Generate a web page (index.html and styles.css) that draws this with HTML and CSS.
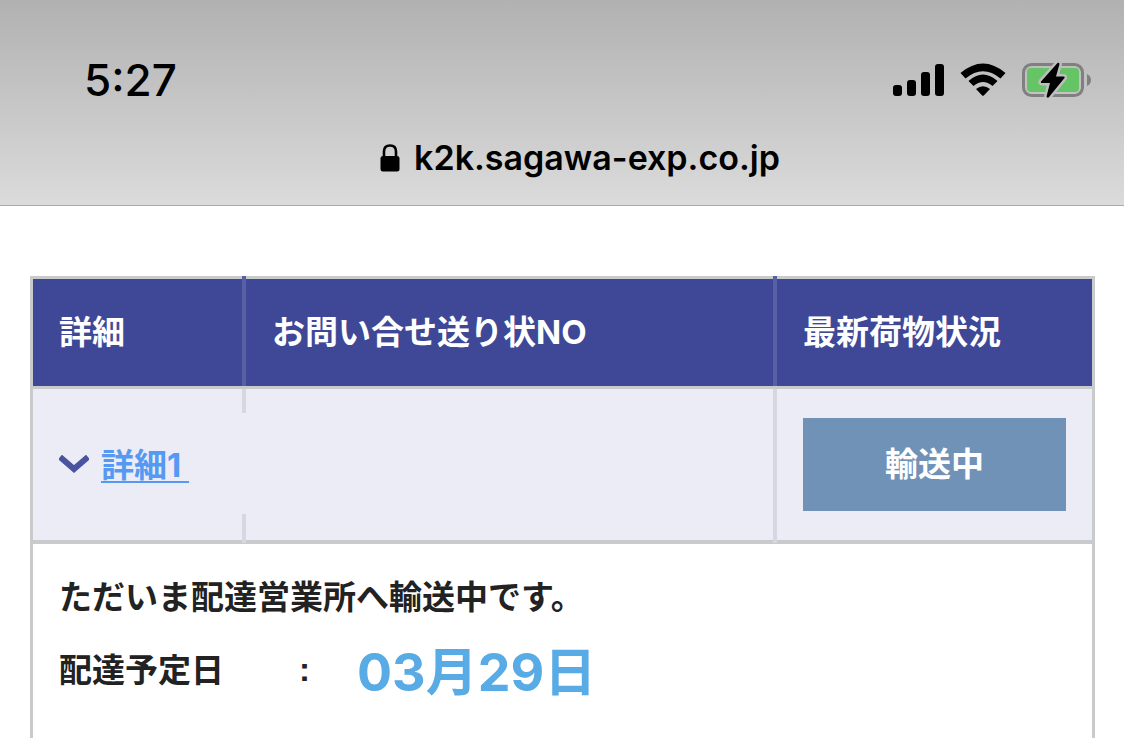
FILE: index.html
```html
<!DOCTYPE html>
<html lang="ja">
<head>
    <meta charset="UTF-8">
    <meta name="viewport" content="width=device-width, initial-scale=1.0">
    <title>お荷物問い合わせ</title>
    <link rel="stylesheet" href="styles.css">
</head>
<body>
    <header class="browser-bar">
        <div class="status">
            <time class="clock">5:27</time>
            <div class="status-icons">
                <svg class="signal" width="51" height="34" viewBox="0 0 51 34">
                    <rect x="0" y="22" width="9" height="11" rx="3"/>
                    <rect x="14" y="17" width="9" height="16" rx="3"/>
                    <rect x="28" y="9" width="9" height="24" rx="3"/>
                    <rect x="42" y="1" width="9" height="32" rx="3"/>
                </svg>
                <svg class="wifi" width="46" height="34" viewBox="0 0 46 34">
                    <path d="M0.5 10 Q23 -9 45.500 10 L40.500 15.500 Q23 1 5.500 15.500 Z"/>
                    <path d="M8.500 18 Q23 5 37.500 18 L32.500 23 Q23 15 13.500 23 Z"/>
                    <path d="M16 26 Q23 20.500 30 26 L23.800 32.500 Q23 33.200 22.200 32.500 Z"/>
                </svg>
                <svg class="battery" width="70" height="36" viewBox="0 0 70 36">
                    <rect x="1.500" y="2.500" width="59" height="31" rx="8" fill="none" stroke="#808080" stroke-width="3"/>
                    <rect x="5" y="6" width="52" height="24" rx="4" fill="#65c466"/>
                    <path d="M65 12 Q69 14 69 18 Q69 22 65 24 Z" fill="#808080"/>
                    <path d="M35.500 1 L19 19.500 Q18.500 21 20 21 L28 21 L24.500 34.500 Q25.500 36.500 27 35 L42.500 16 Q43 14.500 41.500 14.500 L34 14.500 L37.500 2 Q37 0 35.500 1 Z" fill="#000" stroke="#bebebe" stroke-width="5" paint-order="stroke"/>
                </svg>
            </div>
        </div>
        <div class="address">
            <svg class="lock" width="20" height="28" viewBox="0 0 20 28">
                <path d="M4 13 V7.500 Q4 1.500 10 1.500 Q16 1.500 16 7.500 V13" fill="none" stroke="#000" stroke-width="2.600"/>
                <rect x="0.500" y="12" width="19" height="15.500" rx="2.500"/>
            </svg>
            <span>k2k.sagawa-exp.co.jp</span>
        </div>
    </header>

    <main class="content">
        <table class="tracking">
            <colgroup>
                <col class="col-detail">
                <col class="col-number">
                <col class="col-state">
            </colgroup>
            <thead>
                <tr>
                    <th>詳細</th>
                    <th>お問い合せ送り状NO</th>
                    <th>最新荷物状況</th>
                </tr>
            </thead>
            <tbody>
                <tr class="summary">
                    <td class="masked">
                        <div class="toggle">
                            <svg width="30" height="20" viewBox="0 0 30 20">
                                <path d="M1 2 L15 14 L29 2" fill="none" stroke="#4a53a0" stroke-width="6"/>
                            </svg>
                            <a href="#detail1">詳細1&nbsp;</a>
                        </div>
                    </td>
                    <td></td>
                    <td><div class="state">輸送中</div></td>
                </tr>
                <tr class="detail" id="detail1">
                    <td colspan="3">
                        <p class="message">ただいま配達営業所へ輸送中です。</p>
                        <dl class="schedule">
                            <dt>配達予定日</dt>
                            <dd class="colon">:</dd>
                            <dd class="date">03月29日</dd>
                        </dl>
                    </td>
                </tr>
            </tbody>
        </table>
    </main>
</body>
</html>
```

FILE: styles.css
```css
body {
    margin: 0;
    background-color: #fff;
    color: #222;
    font-family: Inter, "Noto Sans CJK JP", sans-serif;
    font-size: 33px;
    font-weight: bold;
    line-height: 48px;
}
svg {
    display: block;
    flex: none;
}
.browser-bar {
    padding: 56px 32px 23px 84px;
    border-bottom: 1px solid #a9a9a9;
    background: linear-gradient(#b1b1b1, #dbdbdb);
    color: #000;
}
.status {
    display: flex;
    justify-content: space-between;
    align-items: center;
}
.clock {
    font-size: 44px;
    font-weight: 500;
}
.status-icons {
    display: flex;
    align-items: center;
    gap: 16px;
}
.address {
    display: flex;
    justify-content: center;
    align-items: center;
    gap: 14px;
    margin-top: 30px;
    padding-right: 16px;
    font-size: 34px;
    font-weight: 600;
}
.content {
    padding: 70px 29px 0 30px;
}
.tracking {
    width: 100%;
    table-layout: fixed;
    border: 3px solid #c9cacc;
    border-bottom: none;
    border-spacing: 0;
}
.col-detail {
    width: 213px;
}
.col-state {
    width: 315px;
}
th,
td {
    position: relative;
    padding: 29px 26px;
    text-align: left;
}
th {
    border-bottom: 3px solid #c9cacc;
    background-color: #3e4897;
    background-clip: padding-box;
    color: #fff;
    line-height: 49px;
}
.summary td {
    border-bottom: 4px solid #c9cacc;
    background-color: #ebecf5;
    background-clip: padding-box;
}
/* column dividers */
th:not(:last-child)::after,
.summary td:not(:last-child)::after {
    content: "";
    position: absolute;
    top: 0;
    right: 0;
    bottom: -3px;
    width: 4px;
    background-color: #d6d7e0;
}
th:not(:last-child)::after {
    top: -3px;
    bottom: 0;
    background-color: #5860a4;
}
.summary td.masked:not(:last-child)::after {
    background: linear-gradient(#d6d7e0 24px, transparent 24px, transparent 125px, #d6d7e0 125px);
}
.toggle {
    display: flex;
    align-items: center;
    gap: 12px;
}
.toggle a {
    color: #5599f2;
    text-decoration-thickness: 2px;
    text-underline-offset: 4px;
}
.state {
    padding: 22px 0 23px;
    background-color: #7092b7;
    color: #fff;
    text-align: center;
}
.message {
    margin: 0;
}
.schedule {
    display: flex;
    align-items: center;
    margin: 16px 0 6px;
    line-height: 60px;
}
.schedule dt {
    width: 240px;
}
.schedule dd {
    margin: 0;
}
.schedule .colon {
    width: 58px;
    font-family: "Liberation Sans", sans-serif;
}
.schedule .date {
    padding-top: 6px;
    color: #58abe5;
    font-size: 52px;
}
```
